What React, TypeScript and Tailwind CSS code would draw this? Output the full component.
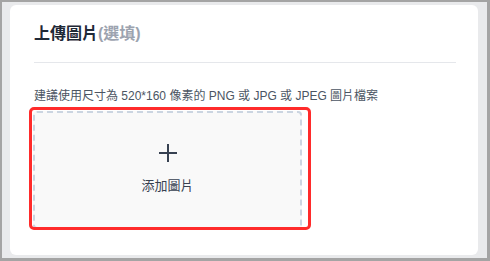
export default function App() {
  return (
    <div
      className="w-[490px] h-[261px] bg-[#e9eaec] border-[#a4a4a4] border-l-2 border-t-2 border-r-[3px] border-b-[3px] pl-2 pt-[3px] pr-[9px]"
      style={{ fontFamily: '"Liberation Sans", "Noto Sans CJK TC", sans-serif' }}
    >
      <div className="h-[250px] bg-white rounded-md pl-6 pr-[22px] pt-[17px]">
        <div className="border-b border-[#e5e7eb] pb-4">
          <h2 className="text-base leading-6 font-semibold text-[#1f2937]">
            上傳圖片<span className="text-[#9ca3af] font-semibold">(選填)</span>
          </h2>
        </div>
        <p className="mt-6 text-xs leading-[18px] text-[#4b5563]">
          建議使用尺寸為 520*160 像素的 PNG 或 JPG 或 JPEG 圖片檔案
        </p>
        <div className="relative mt-[6px] -ml-px w-[269px]">
          <button className="w-[269px] h-[118px] border-2 border-dashed border-[#cbd5e1] rounded-sm bg-[#f9f9f9] flex flex-col items-center justify-center gap-[14px]">
            <svg width="18" height="18" viewBox="0 0 18 18" fill="none" stroke="#374151" strokeWidth="2">
              <path d="M9 0v18M0 9h18" />
            </svg>
            <span className="text-[13px] leading-5 text-[#374151]">添加圖片</span>
          </button>
          <div className="absolute -left-1 -top-1 w-[282px] h-[123px] border-[3px] border-[#ff2b2b] rounded-[5px] pointer-events-none" />
        </div>
      </div>
    </div>
  );
}
